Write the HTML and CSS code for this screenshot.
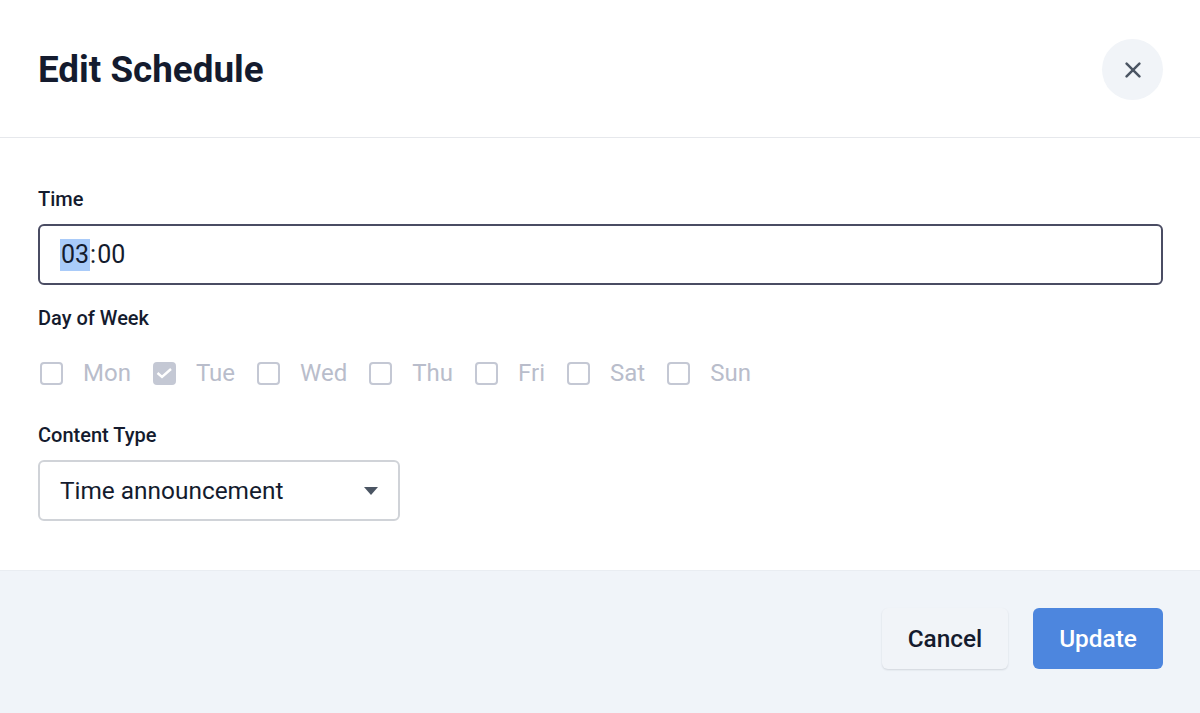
FILE: index.html
```html
<!DOCTYPE html>
<html lang="en">

<head>
    <meta charset="UTF-8">
    <meta name="viewport" content="width=device-width, initial-scale=1.0">
    <title>Edit Schedule</title>
    <link rel="stylesheet" href="styles.css">
</head>

<body>
    <div class="modal">
        <header class="modal-header">
            <h1 class="modal-title">Edit Schedule</h1>
            <button class="close-btn" type="button" aria-label="Close">
                <svg width="16" height="16" viewBox="0 0 16 16">
                    <path d="M1.6 1.6L14.4 14.4M14.4 1.6L1.6 14.4" stroke="#4b5563" stroke-width="2.5" stroke-linecap="round" fill="none" />
                </svg>
            </button>
        </header>

        <main class="modal-body">
            <div class="field field-time">
                <div class="label">Time</div>
                <div class="time-input"><span class="time-part selected">03</span>:<span class="time-part">00</span></div>
            </div>

            <div class="field field-days">
                <div class="label">Day of Week</div>
                <div class="days">
                    <div class="day"><span class="box"></span><span class="day-name">Mon</span></div>
                    <div class="day">
                        <span class="box checked">
                            <svg width="19" height="19" viewBox="0 0 19 19">
                                <path d="M2.5 9L7 13L16 5" stroke="#fff" stroke-width="2.4" fill="none" />
                            </svg>
                        </span>
                        <span class="day-name">Tue</span>
                    </div>
                    <div class="day"><span class="box"></span><span class="day-name">Wed</span></div>
                    <div class="day"><span class="box"></span><span class="day-name">Thu</span></div>
                    <div class="day"><span class="box"></span><span class="day-name">Fri</span></div>
                    <div class="day"><span class="box"></span><span class="day-name">Sat</span></div>
                    <div class="day"><span class="box"></span><span class="day-name">Sun</span></div>
                </div>
            </div>

            <div class="field field-type">
                <div class="label">Content Type</div>
                <div class="select">
                    <span>Time announcement</span>
                    <span class="caret"></span>
                </div>
            </div>
        </main>

        <footer class="modal-footer">
            <button class="btn btn-cancel" type="button">Cancel</button>
            <button class="btn btn-update" type="button">Update</button>
        </footer>
    </div>
</body>

</html>
```

FILE: styles.css
```css
html,
body {
    height: 100%;
    margin: 0;
    background: #fff;
    overflow: hidden;
}

.modal {
    display: flex;
    flex-direction: column;
    height: 713px;
    font-family: Roboto, "Liberation Sans", sans-serif;
    color: #141b2e;
}

.modal-header {
    display: flex;
    align-items: center;
    justify-content: space-between;
    box-sizing: border-box;
    height: 138px;
    padding: 2px 37px 0 38px;
    border-bottom: 1px solid #e6e8ec;
}

.modal-title {
    margin: 0;
    font-size: 36.8px;
    font-weight: 700;
    line-height: 44px;
}

.close-btn {
    display: flex;
    align-items: center;
    justify-content: center;
    width: 61px;
    height: 61px;
    padding: 0;
    border: none;
    border-radius: 50%;
    background: #f1f4f8;
}

.modal-body {
    flex: 1;
    padding: 48px 37px 0 38px;
}

.label {
    font-size: 20px;
    font-weight: 500;
    line-height: 26px;
}

.field-time .label {
    margin-bottom: 12px;
}

.time-input {
    display: flex;
    align-items: center;
    box-sizing: border-box;
    height: 61px;
    padding: 0 20px;
    border: 2px solid #4a4c63;
    border-radius: 6px;
    font-size: 25px;
}

.time-part {
    display: flex;
    align-items: center;
    height: 32px;
    padding: 0 1px;
}

.selected {
    background: #a9cbf9;
}

.field-days {
    margin-top: 20px;
}

.days {
    display: flex;
    align-items: center;
    gap: 22px;
    height: 36px;
    margin: 24px 0 0 2px;
}

.day {
    display: flex;
    align-items: center;
    gap: 20px;
}

.box {
    display: flex;
    align-items: center;
    justify-content: center;
    box-sizing: border-box;
    width: 23px;
    height: 23px;
    border: 2px solid #c4c8d4;
    border-radius: 4px;
}

.box.checked {
    background: #c4c8d4;
}

.day-name {
    font-size: 24px;
    color: #b9bdcb;
}

.field-type {
    margin-top: 31px;
}

.field-type .label {
    margin-bottom: 12px;
}

.select {
    display: flex;
    align-items: center;
    justify-content: space-between;
    box-sizing: border-box;
    width: 362px;
    height: 61px;
    padding: 0 20px;
    border: 2px solid #d0d3d8;
    border-radius: 6px;
    font-size: 24.4px;
}

.caret {
    width: 0;
    height: 0;
    border-left: 7.5px solid transparent;
    border-right: 7.5px solid transparent;
    border-top: 8px solid #4b5563;
}

.modal-footer {
    display: flex;
    justify-content: flex-end;
    gap: 25px;
    box-sizing: border-box;
    height: 143px;
    padding: 37px 37px 0 0;
    background: #f0f4f9;
    border-top: 1px solid #e9edf2;
}

.btn {
    height: 61px;
    border: none;
    border-radius: 6px;
    font-family: inherit;
    font-size: 24.4px;
    font-weight: 500;
}

.btn-cancel {
    width: 126px;
    background: #f1f4f8;
    color: #141b2e;
    box-shadow: 0 1px 2px rgba(20, 27, 46, 0.14);
}

.btn-update {
    width: 130px;
    background: #4d86de;
    color: #fff;
}
```
